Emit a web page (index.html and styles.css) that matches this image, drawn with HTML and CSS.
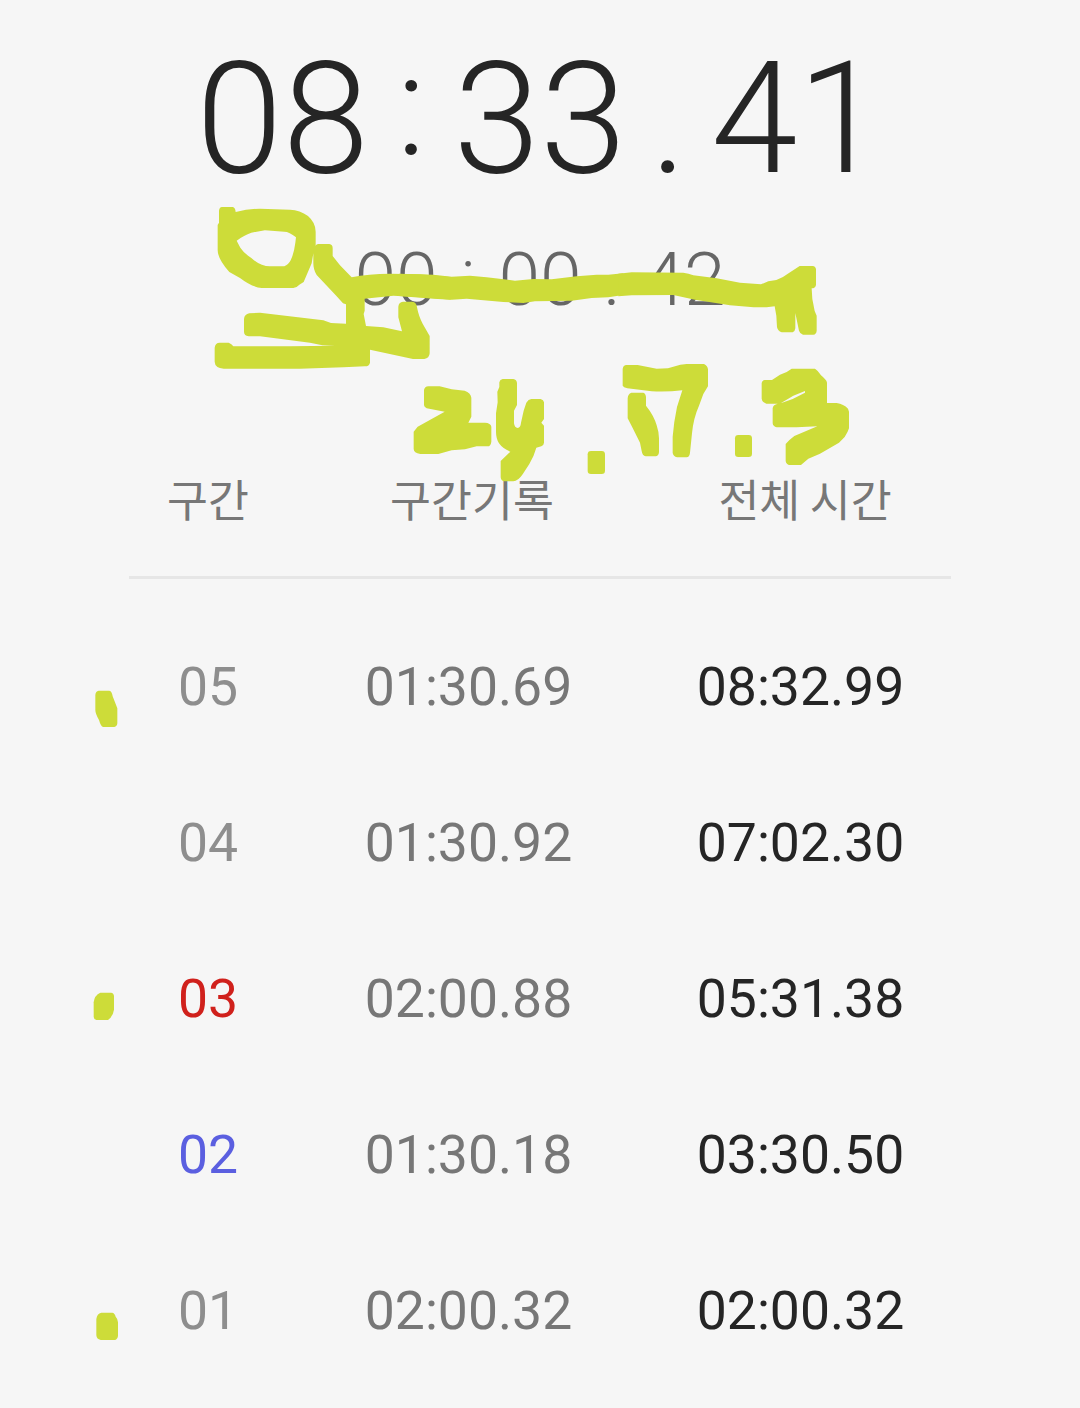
FILE: index.html
```html
<!DOCTYPE html>
<html lang="ko">
<head>
<meta charset="utf-8">
<title>스톱워치</title>
<link rel="stylesheet" href="styles.css">
</head>
<body>
<main class="stopwatch">
  <div class="clock clock-total"><span>08</span><span class="colon">:</span><span>33</span><span>.</span><span>41</span></div>
  <div class="clock clock-lap"><span>00</span><span class="colon">:</span><span>00</span><span>.</span><span>42</span></div>
  <section class="laps">
    <div class="row head"><span>구간</span><span class="head-lap">구간기록</span><span class="head-total">전체 시간</span></div>
    <div class="row"><span class="no">05</span><span class="lap">01:30.69</span><span class="total">08:32.99</span></div>
    <div class="row"><span class="no">04</span><span class="lap">01:30.92</span><span class="total">07:02.30</span></div>
    <div class="row"><span class="no slowest">03</span><span class="lap">02:00.88</span><span class="total">05:31.38</span></div>
    <div class="row"><span class="no fastest">02</span><span class="lap">01:30.18</span><span class="total">03:30.50</span></div>
    <div class="row"><span class="no">01</span><span class="lap">02:00.32</span><span class="total">02:00.32</span></div>
  </section>
  <svg class="ink" viewBox="0 0 1080 1408" aria-hidden="true">
    <g transform="translate(180 190) scale(.33333)">
      <path fill-rule="evenodd" d="M126 51H158Q166 52 167 66Q205 56 240 56L330 59Q360 60 384 78Q407 98 407 125V168Q407 163 414 162H448Q458 163 458 175V198L480 226L515 262Q565 251 630 251L720 253L812 261V329L750 323L640 317L554 326V362L551 372L558 408L610 412L666 424L655 382V350Q656 336 669 335H697Q710 337 711 352Q717 382 728 401L749 438V490Q748 505 733 507H699L570 479V518Q568 529 555 529L490 532L360 536H131Q105 534 104 515V473Q106 458 119 458H146Q155 461 160 469H330L465 467L427 466L390 458L240 439H206Q192 437 192 425V387Q193 373 208 370L240 368L430 391L453 399L498 401V343L489 340L470 319L410 255Q400 240 400 220V190L395 220L371 276L358 284Q349 294 340 294H245Q215 291 180 264L148 246Q113 207 113 180V105L117 98V62Q118 52 126 51ZM170 152L181 173Q192 190 214 204Q241 229 270 229H313Q325 225 332 211Q342 190 346 158L348 142Q328 125 313 125L255 121L214 128Q187 138 170 152Z"/>
    </g>
    <g transform="translate(400 230) scale(.33333)">
      <path d="M-3 131L100 134L155 140L210 137L260 142L345 152L400 147L455 148L530 139L590 134H625L670 130V195L625 202L575 204L515 212L460 213L405 214L370 219L310 216L200 206L155 209L100 206L-3 198Z"/>
    </g>
    <g transform="translate(620 230) scale(.33333)">
      <path d="M-5 131L35 127L190 128Q206 130 220 136L290 145L360 158L423 163L445 154L469 150Q490 142 508 128L539 108H578Q587 109 588 118V165Q586 175 575 175L577 207L584 243L590 257V302Q589 313 580 314H549Q540 312 537 302L526 249V295Q525 305 518 307H485Q473 302 471 291L469 257L464 229L440 232H401L330 226L225 209L160 195L35 196L-5 199Z"/>
    </g>
    <g transform="translate(400 350) scale(.33333)">
      <path d="M85 109H119L155 118L194 122Q212 128 214 143V200L205 218H255Q272 219 274 230V275Q272 289 263 289H230L195 298L155 301L115 312H61Q41 309 41 297V245L53 230L134 185L80 175Q72 171 72 165V120Q74 110 85 109Z"/>
      <path d="M308 87H340Q350 89 351 99V165L342 182V220Q344 234 353 234Q362 232 363 218L371 182L379 158Q385 148 394 147H422Q431 149 432 157V207L424 218L432 227V278Q431 287 424 289L409 293Q403 316 388 342L368 373Q354 394 340 394H312Q303 392 302 382V333L331 305Q308 296 297 280Q288 265 288 245V190L293 157L292 125L298 111V97Q300 88 308 87Z"/>
      <rect x="563" y="303" width="52" height="69" rx="10"/>
    </g>
    <g transform="translate(610 350) scale(.33333)">
      <path d="M48 45H83L140 56L174 55L211 44L230 42H282Q293 48 294 58V109L280 132L267 167Q250 205 246 250L240 308Q239 320 230 322H201Q190 319 188 309V260Q191 218 201 171L217 121Q175 126 125 124L52 115Q40 112 38 107V57Q39 47 48 45Z"/>
      <path d="M64 128H100Q107 130 108 141V167Q132 197 140 226Q147 247 147 265V307Q146 317 138 319H107Q97 317 95 303L90 278L68 234L53 205V145Q54 131 64 128Z"/>
      <rect x="375" y="255" width="51" height="66" rx="10"/>
      <path fill-rule="evenodd" d="M464 90H486L510 74L530 66L545 56H615Q622 60 633 76Q650 90 651 98V159H680Q701 162 714 176L717 185V235Q714 246 704 261L687 278L630 311L595 326L573 345H539Q529 344 527 333V282Q538 269 553 258L622 229L560 232H500Q489 229 488 220V174Q490 164 503 161H469Q456 157 455 146V99Q456 91 464 90ZM512 160L548 147L585 128V123L550 137Z"/>
    </g>
    <g transform="translate(80 640) scale(.33333)"><path d="M56 152H88Q96 154 98 169L112 205V250Q111 260 103 261H69Q62 258 57 240Q46 221 46 210V165Q47 153 56 152Z"/></g>
    <g transform="translate(80 970) scale(.33333)"><path d="M61 68H93Q101 69 102 78V119Q99 140 84 150H49Q42 149 41 141V97Q43 76 61 68Z"/></g>
    <g transform="translate(80 1280) scale(.33333)"><path d="M64 98H97Q104 99 107 110Q114 117 114 127V168Q112 179 104 180H62Q50 178 49 166V117Q51 101 64 98Z"/></g>
  </svg>
</main>
</body>
</html>
```
FILE: styles.css
```css
body {
  margin: 0;
  background: #f6f6f6;
  color: #252525;
  font-family: Roboto, "Noto Sans CJK KR", sans-serif;
}

.stopwatch {
  position: relative;
  box-sizing: border-box;
  height: 1408px;
  padding-top: 28px;
  overflow: hidden;
}

.clock {
  display: grid;
  justify-content: center;
  text-align: center;
  font-weight: 300;
  white-space: nowrap;
}

.clock-total {
  grid-template-columns: 173px 84.5px 173px 84.5px 173px;
  font-size: 156px;
  line-height: 182px;
}

.clock-lap {
  grid-template-columns: 84px 60px 84px 60px 84px;
  margin-top: 25px;
  font-size: 75px;
  line-height: 88px;
  color: #666;
}

.colon {
  font-size: .9em;
  transform: translateY(-.093em);
}

.laps {
  width: 822px;
  margin: 0 auto;
  padding-top: 109px;
}

.row {
  display: grid;
  grid-template-columns: 158px 363px 301px;
  align-items: center;
  height: 156px;
  font-size: 53.5px;
  text-align: center;
}

.row.head {
  height: 147px;
  margin-bottom: 29px;
  padding-bottom: 14px;
  border-bottom: 3px solid #e6e6e6;
  box-sizing: border-box;
  font-family: "Noto Sans CJK KR", sans-serif;
  font-size: 44.5px;
  color: #777;
}

.head-lap { padding-left: 7px; }

.head-total {
  padding-left: 9px;
  word-spacing: -3px;
}

.no { color: #8e8e8e; }
.slowest { color: #d0211c; }
.fastest { color: #5b5fe0; }
.lap { color: #777; }

.ink {
  position: absolute;
  inset: 0;
  width: 1080px;
  height: 1408px;
  fill: #cddc39;
}
```
